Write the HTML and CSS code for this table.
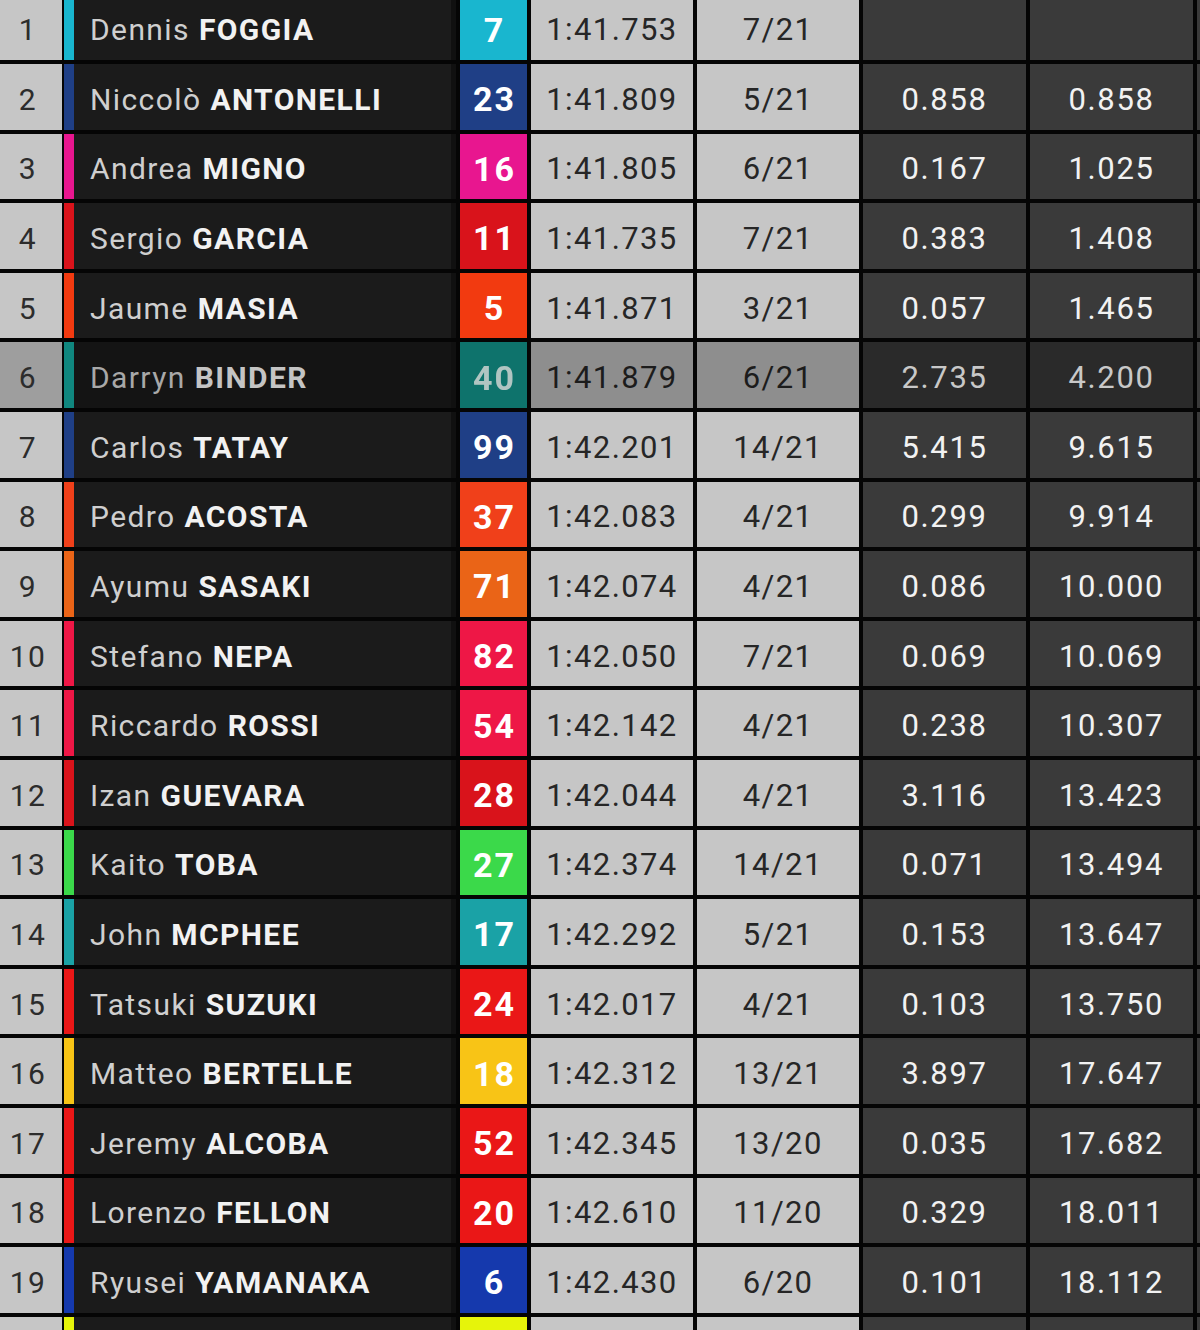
FILE: index.html
```html
<!DOCTYPE html>
<html lang="en">
<head>
<meta charset="utf-8">
<title>Classification</title>
<link rel="stylesheet" href="styles.css">
</head>
<body>
<div class="board">
  <div class="row">
    <div class="pos">1</div><div class="bar c-cyan"></div>
    <div class="name"><span class="first">Dennis</span><span class="last">FOGGIA</span></div>
    <div class="num c-cyan">7</div><div class="time">1:41.753</div><div class="laps">7/21</div>
    <div class="gap"></div><div class="total"></div><div class="extra"></div>
  </div>
  <div class="row">
    <div class="pos">2</div><div class="bar c-navy"></div>
    <div class="name"><span class="first">Niccolò</span><span class="last">ANTONELLI</span></div>
    <div class="num c-navy">23</div><div class="time">1:41.809</div><div class="laps">5/21</div>
    <div class="gap">0.858</div><div class="total">0.858</div><div class="extra"></div>
  </div>
  <div class="row">
    <div class="pos">3</div><div class="bar c-magenta"></div>
    <div class="name"><span class="first">Andrea</span><span class="last">MIGNO</span></div>
    <div class="num c-magenta">16</div><div class="time">1:41.805</div><div class="laps">6/21</div>
    <div class="gap">0.167</div><div class="total">1.025</div><div class="extra"></div>
  </div>
  <div class="row">
    <div class="pos">4</div><div class="bar c-red"></div>
    <div class="name"><span class="first">Sergio</span><span class="last">GARCIA</span></div>
    <div class="num c-red">11</div><div class="time">1:41.735</div><div class="laps">7/21</div>
    <div class="gap">0.383</div><div class="total">1.408</div><div class="extra"></div>
  </div>
  <div class="row">
    <div class="pos">5</div><div class="bar c-redorange"></div>
    <div class="name"><span class="first">Jaume</span><span class="last">MASIA</span></div>
    <div class="num c-redorange">5</div><div class="time">1:41.871</div><div class="laps">3/21</div>
    <div class="gap">0.057</div><div class="total">1.465</div><div class="extra"></div>
  </div>
  <div class="row hl">
    <div class="pos">6</div><div class="bar c-teal"></div>
    <div class="name"><span class="first">Darryn</span><span class="last">BINDER</span></div>
    <div class="num c-teal">40</div><div class="time">1:41.879</div><div class="laps">6/21</div>
    <div class="gap">2.735</div><div class="total">4.200</div><div class="extra"></div>
  </div>
  <div class="row">
    <div class="pos">7</div><div class="bar c-navy"></div>
    <div class="name"><span class="first">Carlos</span><span class="last">TATAY</span></div>
    <div class="num c-navy">99</div><div class="time">1:42.201</div><div class="laps">14/21</div>
    <div class="gap">5.415</div><div class="total">9.615</div><div class="extra"></div>
  </div>
  <div class="row">
    <div class="pos">8</div><div class="bar c-orangered"></div>
    <div class="name"><span class="first">Pedro</span><span class="last">ACOSTA</span></div>
    <div class="num c-orangered">37</div><div class="time">1:42.083</div><div class="laps">4/21</div>
    <div class="gap">0.299</div><div class="total">9.914</div><div class="extra"></div>
  </div>
  <div class="row">
    <div class="pos">9</div><div class="bar c-orange"></div>
    <div class="name"><span class="first">Ayumu</span><span class="last">SASAKI</span></div>
    <div class="num c-orange">71</div><div class="time">1:42.074</div><div class="laps">4/21</div>
    <div class="gap">0.086</div><div class="total">10.000</div><div class="extra"></div>
  </div>
  <div class="row">
    <div class="pos">10</div><div class="bar c-crimson"></div>
    <div class="name"><span class="first">Stefano</span><span class="last">NEPA</span></div>
    <div class="num c-crimson">82</div><div class="time">1:42.050</div><div class="laps">7/21</div>
    <div class="gap">0.069</div><div class="total">10.069</div><div class="extra"></div>
  </div>
  <div class="row">
    <div class="pos">11</div><div class="bar c-crimson"></div>
    <div class="name"><span class="first">Riccardo</span><span class="last">ROSSI</span></div>
    <div class="num c-crimson">54</div><div class="time">1:42.142</div><div class="laps">4/21</div>
    <div class="gap">0.238</div><div class="total">10.307</div><div class="extra"></div>
  </div>
  <div class="row">
    <div class="pos">12</div><div class="bar c-red"></div>
    <div class="name"><span class="first">Izan</span><span class="last">GUEVARA</span></div>
    <div class="num c-red">28</div><div class="time">1:42.044</div><div class="laps">4/21</div>
    <div class="gap">3.116</div><div class="total">13.423</div><div class="extra"></div>
  </div>
  <div class="row">
    <div class="pos">13</div><div class="bar c-green"></div>
    <div class="name"><span class="first">Kaito</span><span class="last">TOBA</span></div>
    <div class="num c-green">27</div><div class="time">1:42.374</div><div class="laps">14/21</div>
    <div class="gap">0.071</div><div class="total">13.494</div><div class="extra"></div>
  </div>
  <div class="row">
    <div class="pos">14</div><div class="bar c-aqua"></div>
    <div class="name"><span class="first">John</span><span class="last">MCPHEE</span></div>
    <div class="num c-aqua">17</div><div class="time">1:42.292</div><div class="laps">5/21</div>
    <div class="gap">0.153</div><div class="total">13.647</div><div class="extra"></div>
  </div>
  <div class="row">
    <div class="pos">15</div><div class="bar c-brightred"></div>
    <div class="name"><span class="first">Tatsuki</span><span class="last">SUZUKI</span></div>
    <div class="num c-brightred">24</div><div class="time">1:42.017</div><div class="laps">4/21</div>
    <div class="gap">0.103</div><div class="total">13.750</div><div class="extra"></div>
  </div>
  <div class="row">
    <div class="pos">16</div><div class="bar c-yellow"></div>
    <div class="name"><span class="first">Matteo</span><span class="last">BERTELLE</span></div>
    <div class="num c-yellow">18</div><div class="time">1:42.312</div><div class="laps">13/21</div>
    <div class="gap">3.897</div><div class="total">17.647</div><div class="extra"></div>
  </div>
  <div class="row">
    <div class="pos">17</div><div class="bar c-brightred"></div>
    <div class="name"><span class="first">Jeremy</span><span class="last">ALCOBA</span></div>
    <div class="num c-brightred">52</div><div class="time">1:42.345</div><div class="laps">13/20</div>
    <div class="gap">0.035</div><div class="total">17.682</div><div class="extra"></div>
  </div>
  <div class="row">
    <div class="pos">18</div><div class="bar c-brightred"></div>
    <div class="name"><span class="first">Lorenzo</span><span class="last">FELLON</span></div>
    <div class="num c-brightred">20</div><div class="time">1:42.610</div><div class="laps">11/20</div>
    <div class="gap">0.329</div><div class="total">18.011</div><div class="extra"></div>
  </div>
  <div class="row">
    <div class="pos">19</div><div class="bar c-blue"></div>
    <div class="name"><span class="first">Ryusei</span><span class="last">YAMANAKA</span></div>
    <div class="num c-blue">6</div><div class="time">1:42.430</div><div class="laps">6/20</div>
    <div class="gap">0.101</div><div class="total">18.112</div><div class="extra"></div>
  </div>
  <div class="row">
    <div class="pos"></div><div class="bar c-lime"></div>
    <div class="name"></div>
    <div class="num c-lime"></div><div class="time"></div><div class="laps"></div>
    <div class="gap"></div><div class="total"></div><div class="extra"></div>
  </div>
</div>
</body>
</html>
```

FILE: styles.css
```css
html, body {
  margin: 0;
  padding: 0;
  background: #050505;
  overflow: hidden;
}

.board {
  display: flex;
  flex-direction: column;
  gap: 4px;
  margin-top: -5.6px;
  width: 1200px;
  font-family: Roboto, "Noto Sans", sans-serif;
}

.row {
  display: flex;
  height: 65.6px;
  flex: none;
}

.row > div {
  display: flex;
  align-items: center;
  justify-content: center;
  flex: none;
  height: 100%;
  box-sizing: border-box;
  padding-top: 5px;
}

.pos {
  width: 62px;
  background: #c6c6c6;
  color: #2c2c2c;
  font-size: 30px;
  letter-spacing: 1.5px;
  padding-right: 6px;
}

.bar {
  width: 10px;
  margin-left: 2px;
}

.name {
  width: 382px;
  background: #1b1b1b;
  box-shadow: inset -5px 0 0 #101010;
  justify-content: flex-start !important;
  padding-left: 16px;
  font-size: 30px;
  letter-spacing: 1.4px;
  white-space: nowrap;
}

.first {
  color: #cfcfcf;
  font-weight: 400;
  margin-right: 9px;
}

.last {
  color: #f2f2f2;
  font-weight: 700;
}

.num {
  width: 67px;
  margin-left: 4px;
  color: #ffffff;
  font-weight: 700;
  font-size: 34px;
  letter-spacing: 2px;
  padding-left: 2px;
}

.time, .laps {
  width: 162px;
  margin-left: 4px;
  background: #c6c6c6;
  color: #262626;
  font-size: 31px;
  letter-spacing: 1.4px;
}

.gap, .total {
  width: 163px;
  margin-left: 4px;
  background: #3a3a3a;
  color: #f2f2f2;
  font-size: 31px;
  letter-spacing: 1.6px;
}

.extra {
  width: 30px;
  margin-left: 4px;
  background: #3a3a3a;
}

/* highlighted row */
.hl .pos { background: #9e9e9e; }
.hl .name { background: #141414; }
.hl .first { color: #a8a8a8; }
.hl .last { color: #c4c4c4; }
.hl .num { filter: brightness(0.85); color: #cfe8e4; }
.hl .time, .hl .laps { background: #8e8e8e; color: #1c1c1c; }
.hl .gap, .hl .total { background: #2a2a2a; color: #c8c8c8; }

/* team colours */
.c-cyan { background: #19b6cf; }
.c-navy { background: #1f3f86; }
.c-magenta { background: #e8168f; }
.c-red { background: #d9131b; }
.c-redorange { background: #f23a10; }
.c-teal { background: #10877f; }
.c-orangered { background: #f0401a; }
.c-orange { background: #ea6417; }
.c-crimson { background: #ee1746; }
.c-green { background: #3bd94a; }
.c-aqua { background: #1aa2a6; }
.c-brightred { background: #ea1717; }
.c-yellow { background: #f8c416; }
.c-blue { background: #1539ad; }
.c-lime { background: #e6f40a; }
```
